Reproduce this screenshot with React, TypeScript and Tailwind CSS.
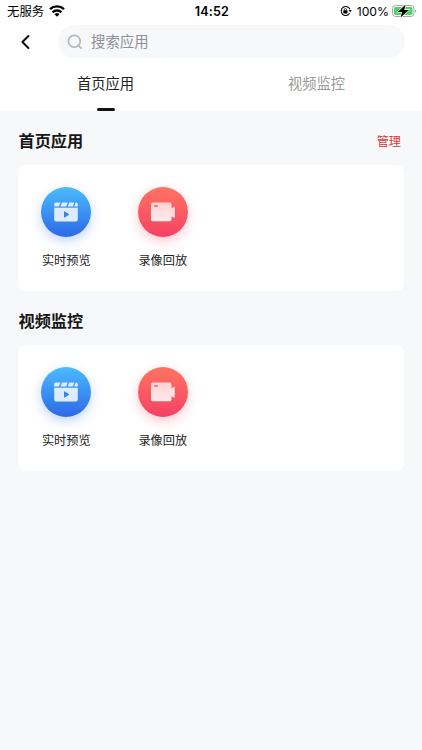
import { useState } from 'react';

type AppKind = 'preview' | 'playback';

interface AppEntry {
  kind: AppKind;
  label: string;
}

const SECTIONS: { title: string; editable?: boolean; apps: AppEntry[] }[] = [
  {
    title: '首页应用',
    editable: true,
    apps: [
      { kind: 'preview', label: '实时预览' },
      { kind: 'playback', label: '录像回放' },
    ],
  },
  {
    title: '视频监控',
    apps: [
      { kind: 'preview', label: '实时预览' },
      { kind: 'playback', label: '录像回放' },
    ],
  },
];

const TABS = ['首页应用', '视频监控'];

function StatusBar() {
  return (
    <div className="grid h-[22px] grid-cols-3 items-center pl-[7px] pr-[5px] text-black">
      <div className="flex items-center gap-[5px]">
        <span className="pt-px text-[12.4px] leading-[22px]">无服务</span>
        <svg className="-mt-[2px]" width="16" height="12" viewBox="0 0 16 12" fill="none" stroke="currentColor" strokeWidth="2.4">
          <path d="M1 4.2a10.2 10.2 0 0 1 14 0" />
          <path d="M3.6 7.3a6.3 6.3 0 0 1 8.8 0" />
          <path d="M8 11.7 5.5 9.2a3.6 3.6 0 0 1 5 0Z" fill="currentColor" stroke="none" />
        </svg>
      </div>
      <span className="text-center text-[12.6px] font-semibold leading-[22px] tracking-[0.15px]">14:52</span>
      <div className="flex items-center justify-end">
        <svg className="-mt-px mr-[5px]" width="12" height="12" viewBox="0 0 12 12" fill="none" stroke="currentColor">
          <path d="M9.9 4.3A4.5 4.5 0 1 0 9.6 8.3" strokeWidth="1.1" />
          <path d="M8.6 5.1h3.2l-1.6 2.2Z" fill="currentColor" stroke="none" />
          <rect x="3.3" y="5.3" width="4.2" height="3.2" rx=".5" fill="currentColor" stroke="none" />
          <path d="M4.2 5.6v-.8a1.2 1.2 0 0 1 2.4 0v.8" strokeWidth=".8" />
        </svg>
        <span className="mr-[3px] text-[12.2px] leading-[22px]">100%</span>
        <svg className="-mt-[2px]" width="25" height="14" viewBox="0 0 25 14">
          <rect x=".5" y="1.5" width="21.5" height="11" rx="3.2" fill="#fff" stroke="#a5a5a5" />
          <rect x="2" y="3" width="18.5" height="8" rx="1.8" fill="#4fd063" />
          <path d="M23.3 5.4c1.3.5 1.3 2.7 0 3.2Z" fill="#8b8b8b" />
          <path
            d="M13.6.4 5.8 8h4.3L8.5 13.6 17 5.9h-4.7Z"
            fill="#000"
            stroke="#fff"
            strokeWidth="1.2"
            paintOrder="stroke"
          />
        </svg>
      </div>
    </div>
  );
}

function PreviewIcon() {
  return (
    <svg className="mt-px" width="24" height="20" viewBox="0 0 24 20" fill="#deecff">
      <path d="M2 .4h4.4L4.9 4.6H.2V2.2C.2 1.1.9.4 2 .4Z" />
      <path d="M8.1.4h5.6l-1.5 4.2H6.5Z" />
      <path d="M15.3.4h5l-1.5 4.2h-5Z" />
      <path d="M21.7.4h.3c1.1 0 1.8.7 1.8 1.8v2.4h-3.6Z" />
      <path d="M.2 5.8h23.6v11.8a2 2 0 0 1-2 2H2.2a2 2 0 0 1-2-2Z" />
      <path d="M10 9.7v5.4c0 .4.4.5.7.3l4-2.5c.4-.2.4-.7 0-.9l-4-2.6c-.3-.2-.7-.1-.7.3Z" fill="#3484ef" />
    </svg>
  );
}

function PlaybackIcon() {
  return (
    <svg className="ml-px mt-px" width="24" height="20" viewBox="0 0 24 20">
      <defs>
        <linearGradient id="camera" x1="0" y1="0" x2="0" y2="1">
          <stop offset="0" stopColor="#ffd3d2" />
          <stop offset="1" stopColor="#ffeaee" />
        </linearGradient>
      </defs>
      <path
        fill="url(#camera)"
        d="M1.8.6h16.9a1.8 1.8 0 0 1 1.8 1.8v3.9l2.2-1.4c.5-.3 1.1 0 1.1.6v9.5c0 .6-.6.9-1.1.6l-2.2-1.4v3.2a1.8 1.8 0 0 1-1.8 1.8H1.8A1.8 1.8 0 0 1 0 17.4v-15A1.8 1.8 0 0 1 1.8.6Z"
      />
      <rect x="3" y="3.2" width="4" height="1.5" rx=".7" fill="#f35b61" />
    </svg>
  );
}

function AppItem({ kind, label }: AppEntry) {
  const isPreview = kind === 'preview';
  return (
    <button className="flex w-[96.5px] flex-col items-center">
      <span
        className={`flex h-[50px] w-[50px] items-center justify-center rounded-full bg-linear-to-b ${
          isPreview
            ? 'from-[#4ebbfd] to-[#2f67e6] shadow-[0_4px_12px_rgba(52,116,240,0.3)]'
            : 'from-[#ff7362] to-[#f43f63] shadow-[0_4px_12px_rgba(247,72,100,0.3)]'
        }`}
      >
        {isPreview ? <PreviewIcon /> : <PlaybackIcon />}
      </span>
      <span className="mt-[15px] text-[12.2px] leading-[18px] text-[#222]">{label}</span>
    </button>
  );
}

export default function App() {
  const [activeTab, setActiveTab] = useState(0);

  return (
    <div className="min-h-screen bg-[#f7f8fa] font-[Inter,'Noto_Sans_CJK_SC',sans-serif]">
      <header className="h-[111px] bg-white">
        <StatusBar />
        <div className="flex items-center pl-[20px] pr-[17px] pt-[3px]">
          <button className="mr-[27px]" aria-label="返回">
            <svg width="11" height="16" viewBox="0 0 11 16" fill="none" stroke="#111" strokeWidth="2">
              <path d="M8.4 2 2.4 8l6 6" strokeLinecap="round" strokeLinejoin="round" />
            </svg>
          </button>
          <div className="flex h-[33px] flex-1 items-center rounded-full bg-[#f7f8fa] pl-[9px]">
            <svg width="16" height="16" viewBox="0 0 16 16" fill="none" stroke="#b8b9bb" strokeWidth="1.7">
              <circle cx="7.3" cy="7.3" r="5.9" />
              <path d="m11.8 11.8 2.4 2.4" strokeLinecap="round" />
            </svg>
            <span className="ml-[8px] text-[14.4px] leading-[20px] text-[#8f9093]">搜索应用</span>
          </div>
        </div>
        <nav className="grid h-[53px] grid-cols-2">
          {TABS.map((tab, index) => (
            <button
              key={tab}
              onClick={() => setActiveTab(index)}
              className={`flex flex-col items-center pt-[16px] text-[14.3px] leading-[20px] ${
                activeTab === index ? 'text-[#222]' : 'text-[#999]'
              }`}
            >
              {tab}
              {activeTab === index && <span className="mt-[14px] h-[3px] w-[18px] shrink-0 rounded-full bg-[#111]" />}
            </button>
          ))}
        </nav>
      </header>

      <main className="px-[18px] pt-[18px]">
        {SECTIONS.map((section) => (
          <section key={section.title} className="mb-[18px]">
            <div className="flex h-[24px] items-center justify-between pr-[3px]">
              <h2 className="pl-[0.5px] text-[16.2px] font-bold leading-[24px] text-[#161616]">{section.title}</h2>
              {section.editable && (
                <button className="pt-[2px] text-[12.2px] leading-[18px] text-[#df3434]">管理</button>
              )}
            </div>
            <div className="mt-[12px] flex h-[126px] rounded-[8px] bg-white pt-[21.5px]">
              {section.apps.map((app) => (
                <AppItem key={app.label} {...app} />
              ))}
            </div>
          </section>
        ))}
      </main>
    </div>
  );
}
